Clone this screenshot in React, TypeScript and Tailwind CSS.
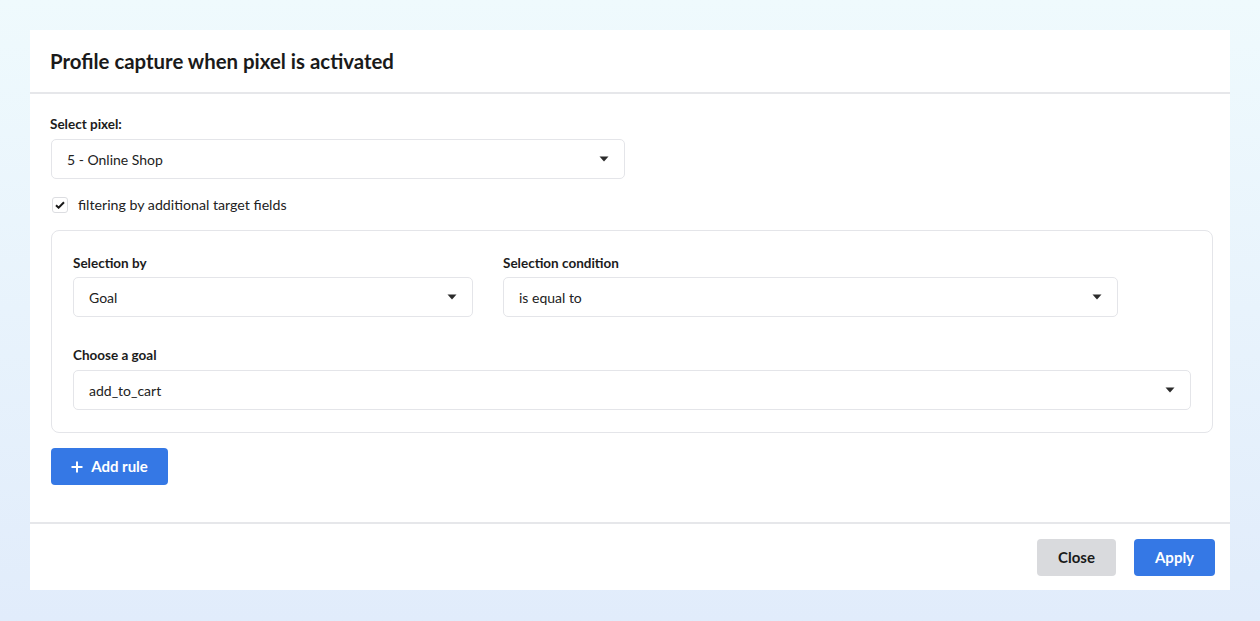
const Caret = () => (
  <svg width="10" height="6" viewBox="0 0 10 6" className="shrink-0">
    <path d="M0.5 0.5h9L5 5.5z" fill="#2b2b2b" />
  </svg>
);

const SelectBox = ({ value, className = "" }: { value: string; className?: string }) => (
  <div
    className={`h-10 flex items-center justify-between pl-[15px] pr-[15px] bg-white border border-[#e4e5e9] rounded-[5px] text-[14px] text-[#222] ${className}`}
  >
    <span>{value}</span>
    <Caret />
  </div>
);

const Label = ({ children }: { children: React.ReactNode }) => (
  <div className="text-[13.5px] leading-5 font-bold text-[#1c1c1c]">{children}</div>
);

export default function App() {
  return (
    <div
      className="w-[1260px] h-[621px] bg-gradient-to-b from-[#effafd] to-[#e1ecfb] pt-[30px] pl-[30px]"
      style={{ fontFamily: "Lato, 'Noto Sans', sans-serif" }}
    >
      <div className="w-[1200px] h-[560px] bg-white flex flex-col">
        {/* Header */}
        <div className="h-[64px] shrink-0 flex items-center px-5 border-b-2 border-[#e6e7ea]">
          <h1 className="text-[20.4px] font-bold text-[#1a1a1a]">Profile capture when pixel is activated</h1>
        </div>

        {/* Body */}
        <div className="flex-1 px-5 pt-[20px] border-b-2 border-[#e6e7ea]">
          <Label>Select pixel:</Label>
          <SelectBox value="5 - Online Shop" className="w-[574px] mt-[5px] ml-px" />

          <label className="flex items-center gap-[10px] mt-[18px] ml-[2px] h-4">
            <span className="w-4 h-4 border border-[#dcdde1] rounded-[3px] flex items-center justify-center bg-white">
              <svg width="10" height="8" viewBox="0 0 10 8">
                <path d="M1 4.2l2.6 2.5L9 1.2" fill="none" stroke="#1a1a1a" strokeWidth="2" />
              </svg>
            </span>
            <span className="text-[14.2px] text-[#222]">filtering by additional target fields</span>
          </label>

          <div className="mt-[17px] ml-px w-[1162px] border border-[#e4e5e9] rounded-[8px] px-[21px] pt-[22px] pb-[22px]">
            <div className="flex gap-[30px]">
              <div className="w-[400px]">
                <Label>Selection by</Label>
                <SelectBox value="Goal" className="mt-1" />
              </div>
              <div className="w-[615px]">
                <Label>Selection condition</Label>
                <SelectBox value="is equal to" className="mt-1" />
              </div>
            </div>
            <div className="mt-[28px]">
              <Label>Choose a goal</Label>
              <SelectBox value="add_to_cart" className="mt-[5px]" />
            </div>
          </div>

          <button className="mt-[15px] ml-px h-[37px] w-[117px] bg-[#3578e5] rounded-[4px] flex items-center justify-center gap-[8px] text-white text-[15px] font-bold">
            <svg width="12" height="12" viewBox="0 0 12 12">
              <path d="M6 0.5v11M0.5 6h11" stroke="white" strokeWidth="2" />
            </svg>
            Add rule
          </button>
        </div>

        {/* Footer */}
        <div className="h-[66px] shrink-0 flex items-center justify-end gap-[18px] pr-[15px]">
          <button className="h-[37px] w-[79px] rounded-[4px] bg-[#d9dadd] text-[15px] font-bold text-[#1a1a1a]">
            Close
          </button>
          <button className="h-[37px] w-[81px] rounded-[4px] bg-[#3578e5] text-[15px] font-bold text-white">
            Apply
          </button>
        </div>
      </div>
    </div>
  );
}
